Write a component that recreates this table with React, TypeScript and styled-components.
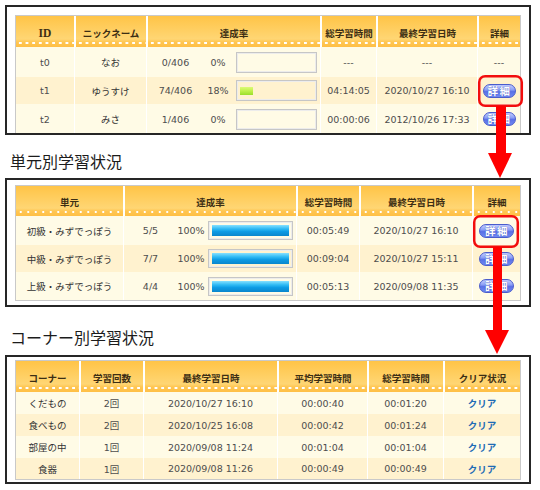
import React from "react";
import styled, { createGlobalStyle } from "styled-components";

const GlobalStyle = createGlobalStyle`
  html, body { margin: 0; padding: 0; background: #ffffff; }
  body { font-family: "DejaVu Sans", "Noto Sans CJK JP", sans-serif; }
  *, *::before, *::after { box-sizing: border-box; }
`;

const Page = styled.div`
  position: relative;
  width: 540px;
  height: 490px;
  overflow: hidden;
  padding: 5px 0 0 5px;
  display: flex;
  flex-direction: column;
`;

const Frame = styled.section<{ $h: number; $pt: number }>`
  flex: none;
  width: 526px;
  height: ${(p) => p.$h}px;
  border: 2px solid #262626;
  padding: ${(p) => p.$pt}px 8px 0 8px;
  overflow: hidden;
  background: #ffffff;
`;

const Title = styled.h2<{ $h: number; $pt: number }>`
  flex: none;
  margin: 0;
  height: ${(p) => p.$h}px;
  padding: ${(p) => p.$pt}px 0 0 5px;
  font-family: "Noto Sans CJK JP", sans-serif;
  font-weight: 400;
  font-size: 16px;
  line-height: 20px;
  color: #1c1c1c;
`;

const Table = styled.table`
  width: 506px;
  border-collapse: separate;
  border-spacing: 0;
  table-layout: fixed;
  border: 1px solid #c9c9c9;
`;

const Col = styled.col<{ $w: number }>`
  width: ${(p) => p.$w}px;
`;

const Th = styled.th<{ $h: number; $dot: number; $serif?: boolean }>`
  height: ${(p) => p.$h}px;
  padding: 2px 0 0 0;
  border-left: 2px solid #ffffff;
  &:first-child { border-left: none; }
  background:
    radial-gradient(circle at center, #ffffff 0 1.1px, transparent 1.5px) left 1px bottom 2px / ${(p) => p.$dot}px 4px repeat-x,
    linear-gradient(180deg, #ffc447 0%, #ffcf62 45%, #ffd674 74%, #ffc652 84%, #ffbf45 100%);
  color: #3c2e14;
  font-family: ${(p) => (p.$serif ? '"Liberation Serif", serif' : '"Noto Sans CJK JP", sans-serif')};
  font-size: ${(p) => (p.$serif ? "11.5px" : "9.5px")};
  font-weight: 700;
  text-align: center;
  vertical-align: middle;
  white-space: nowrap;
`;

const Tr = styled.tr<{ $alt: boolean }>`
  background: ${(p) => (p.$alt ? "#fff2cf" : "#fffbe6")};
`;

const Td = styled.td<{ $h: number; $jp?: boolean }>`
  height: ${(p) => p.$h}px;
  padding: 0;
  border-left: 1px solid #ffffff;
  &:first-child { border-left: none; }
  color: ${(p) => (p.$jp ? "#333333" : "#4d4d4d")};
  font-size: 9.5px;
  text-align: center;
  vertical-align: middle;
  white-space: nowrap;
`;

const Rate = styled.div<{ $count: number; $pct: number }>`
  display: grid;
  grid-template-columns: ${(p) => p.$count}px ${(p) => p.$pct}px 1fr;
  align-items: center;
`;

const Meter = styled.div<{ $h: number; $ml: number; $mr: number }>`
  height: ${(p) => p.$h}px;
  margin: 0 ${(p) => p.$mr}px 0 ${(p) => p.$ml}px;
  padding: 0 3px;
  border: 1px solid #c6c6c6;
  box-shadow: inset 0 0 0 1px #ececec;
  display: flex;
  align-items: center;
`;

const Fill = styled.div<{ $kind: "green" | "blue" }>`
  height: ${(p) => (p.$kind === "green" ? 8 : 11)}px;
  background: ${(p) =>
    p.$kind === "green"
      ? "linear-gradient(180deg, #dcfa78 0%, #bff04a 50%, #9ade2a 100%)"
      : "linear-gradient(180deg, #86e0ff 0%, #2fbaf4 35%, #0d9be4 60%, #0a86cc 100%)"};
`;

const DetailButton = styled.button<{ $w: number }>`
  width: ${(p) => p.$w}px;
  height: 14px;
  padding: 0 0 0 1px;
  border: 1px solid #4a5ccc;
  border-radius: 7px;
  background: linear-gradient(180deg, #c2ccff 0%, #8c9ff5 40%, #5a70e6 55%, #7089f2 100%);
  color: #ffffff;
  font-family: "Noto Sans CJK JP", sans-serif;
  font-size: 10.5px;
  font-weight: 700;
  line-height: 12px;
  letter-spacing: 1.5px;
  text-shadow: 0 0 1px #3246b0;
  display: inline-block;
  vertical-align: middle;
`;

const Clear = styled.span`
  color: #1f6cb5;
  font-family: "Noto Sans CJK JP", sans-serif;
  font-weight: 700;
  font-size: 9.5px;
`;

const Overlay = styled.svg`
  position: absolute;
  left: 0;
  top: 0;
  pointer-events: none;
`;

type UserRow = { id: string; name: string; count: string; pct: number; time?: string; date?: string };

const users: UserRow[] = [
  { id: "t0", name: "なお", count: "0/406", pct: 0 },
  { id: "t1", name: "ゆうすけ", count: "74/406", pct: 18, time: "04:14:05", date: "2020/10/27 16:10" },
  { id: "t2", name: "みさ", count: "1/406", pct: 0, time: "00:00:06", date: "2012/10/26 17:33" },
];
const userRowH = [30, 27, 30];

const units = [
  { name: "初級・みずでっぽう", count: "5/5", time: "00:05:49", date: "2020/10/27 16:10" },
  { name: "中級・みずでっぽう", count: "7/7", time: "00:09:04", date: "2020/10/27 15:11" },
  { name: "上級・みずでっぽう", count: "4/4", time: "00:05:13", date: "2020/09/08 11:35" },
];
const unitRowH = [29, 27, 28];

const corners = [
  { name: "くだもの", times: "2回", date: "2020/10/27 16:10", avg: "00:00:40", total: "00:01:20" },
  { name: "食べもの", times: "2回", date: "2020/10/25 16:08", avg: "00:00:42", total: "00:01:24" },
  { name: "部屋の中", times: "1回", date: "2020/09/08 11:24", avg: "00:01:04", total: "00:01:04" },
  { name: "食器", times: "1回", date: "2020/09/08 11:26", avg: "00:00:49", total: "00:00:49" },
];
const cornerRowH = [22, 22, 22, 21];

export default function App() {
  return (
    <Page>
      <GlobalStyle />
      <Frame $h={130} $pt={8}>
        <Table>
          <colgroup>
            {[58, 72, 174, 56, 101, 43].map((w, i) => (
              <Col key={i} $w={w} />
            ))}
          </colgroup>
          <thead>
            <tr>
              <Th $h={31} $dot={6.67} $serif>ID</Th>
              <Th $h={31} $dot={6.67}>ニックネーム</Th>
              <Th $h={31} $dot={6.67}>達成率</Th>
              <Th $h={31} $dot={6.67}>総学習時間</Th>
              <Th $h={31} $dot={6.67}>最終学習日時</Th>
              <Th $h={31} $dot={6.67}>詳細</Th>
            </tr>
          </thead>
          <tbody>
            {users.map((u, i) => (
              <Tr key={u.id} $alt={i % 2 === 1}>
                <Td $h={userRowH[i]}>{u.id}</Td>
                <Td $h={userRowH[i]} $jp>{u.name}</Td>
                <Td $h={userRowH[i]}>
                  <Rate $count={57} $pct={28}>
                    <span>{u.count}</span>
                    <span>{u.pct}%</span>
                    <Meter $h={21} $ml={4} $mr={3}>
                      <Fill $kind="green" style={{ width: `${u.pct}%` }} />
                    </Meter>
                  </Rate>
                </Td>
                <Td $h={userRowH[i]}>{u.time ?? "---"}</Td>
                <Td $h={userRowH[i]}>{u.date ?? "---"}</Td>
                <Td $h={userRowH[i]}>{u.time ? <DetailButton $w={33}>詳細</DetailButton> : "---"}</Td>
              </Tr>
            ))}
          </tbody>
        </Table>
      </Frame>

      <Title $h={43} $pt={16}>単元別学習状況</Title>

      <Frame $h={129} $pt={5}>
        <Table>
          <colgroup>
            {[107, 173, 63, 113, 48].map((w, i) => (
              <Col key={i} $w={w} />
            ))}
          </colgroup>
          <thead>
            <tr>
              <Th $h={30} $dot={7.5}>単元</Th>
              <Th $h={30} $dot={7.5}>達成率</Th>
              <Th $h={30} $dot={7.5}>総学習時間</Th>
              <Th $h={30} $dot={7.5}>最終学習日時</Th>
              <Th $h={30} $dot={7.5}>詳細</Th>
            </tr>
          </thead>
          <tbody>
            {units.map((u, i) => (
              <Tr key={u.name} $alt={i % 2 === 1}>
                <Td $h={unitRowH[i]} $jp>{u.name}</Td>
                <Td $h={unitRowH[i]}>
                  <Rate $count={53} $pct={28}>
                    <span>{u.count}</span>
                    <span>100%</span>
                    <Meter $h={19} $ml={3} $mr={3}>
                      <Fill $kind="blue" style={{ width: "100%" }} />
                    </Meter>
                  </Rate>
                </Td>
                <Td $h={unitRowH[i]}>{u.time}</Td>
                <Td $h={unitRowH[i]}>{u.date}</Td>
                <Td $h={unitRowH[i]}>
                  <DetailButton $w={35}>詳細</DetailButton>
                </Td>
              </Tr>
            ))}
          </tbody>
        </Table>
      </Frame>

      <Title $h={48} $pt={20}>コーナー別学習状況</Title>

      <Frame $h={129} $pt={3}>
        <Table>
          <colgroup>
            {[63, 64, 134, 90, 76, 77].map((w, i) => (
              <Col key={i} $w={w} />
            ))}
          </colgroup>
          <thead>
            <tr>
              <Th $h={31} $dot={6.67}>コーナー</Th>
              <Th $h={31} $dot={6.67}>学習回数</Th>
              <Th $h={31} $dot={6.67}>最終学習日時</Th>
              <Th $h={31} $dot={6.67}>平均学習時間</Th>
              <Th $h={31} $dot={6.67}>総学習時間</Th>
              <Th $h={31} $dot={6.67}>クリア状況</Th>
            </tr>
          </thead>
          <tbody>
            {corners.map((c, i) => (
              <Tr key={c.name} $alt={i % 2 === 1}>
                <Td $h={cornerRowH[i]} $jp>{c.name}</Td>
                <Td $h={cornerRowH[i]}>{c.times}</Td>
                <Td $h={cornerRowH[i]}>{c.date}</Td>
                <Td $h={cornerRowH[i]}>{c.avg}</Td>
                <Td $h={cornerRowH[i]}>{c.total}</Td>
                <Td $h={cornerRowH[i]}>
                  <Clear>クリア</Clear>
                </Td>
              </Tr>
            ))}
          </tbody>
        </Table>
      </Frame>

      <Overlay width={540} height={490} viewBox="0 0 540 490">
        <rect x={479.2} y={76.2} width={42.6} height={29.6} rx={6} fill="none" stroke="#f20d0d" strokeWidth={2.5} />
        <rect x={496} y={106} width={10} height={48} fill="#ff0000" />
        <polygon points="488,153 512,153 500,178" fill="#ff0000" />
        <rect x={474.2} y={216.2} width={43.6} height={30.6} rx={6} fill="none" stroke="#f20d0d" strokeWidth={2.5} />
        <rect x={493} y={247} width={9} height={84} fill="#ff0000" />
        <polygon points="485,330 509,330 497,354" fill="#ff0000" />
      </Overlay>
    </Page>
  );
}
